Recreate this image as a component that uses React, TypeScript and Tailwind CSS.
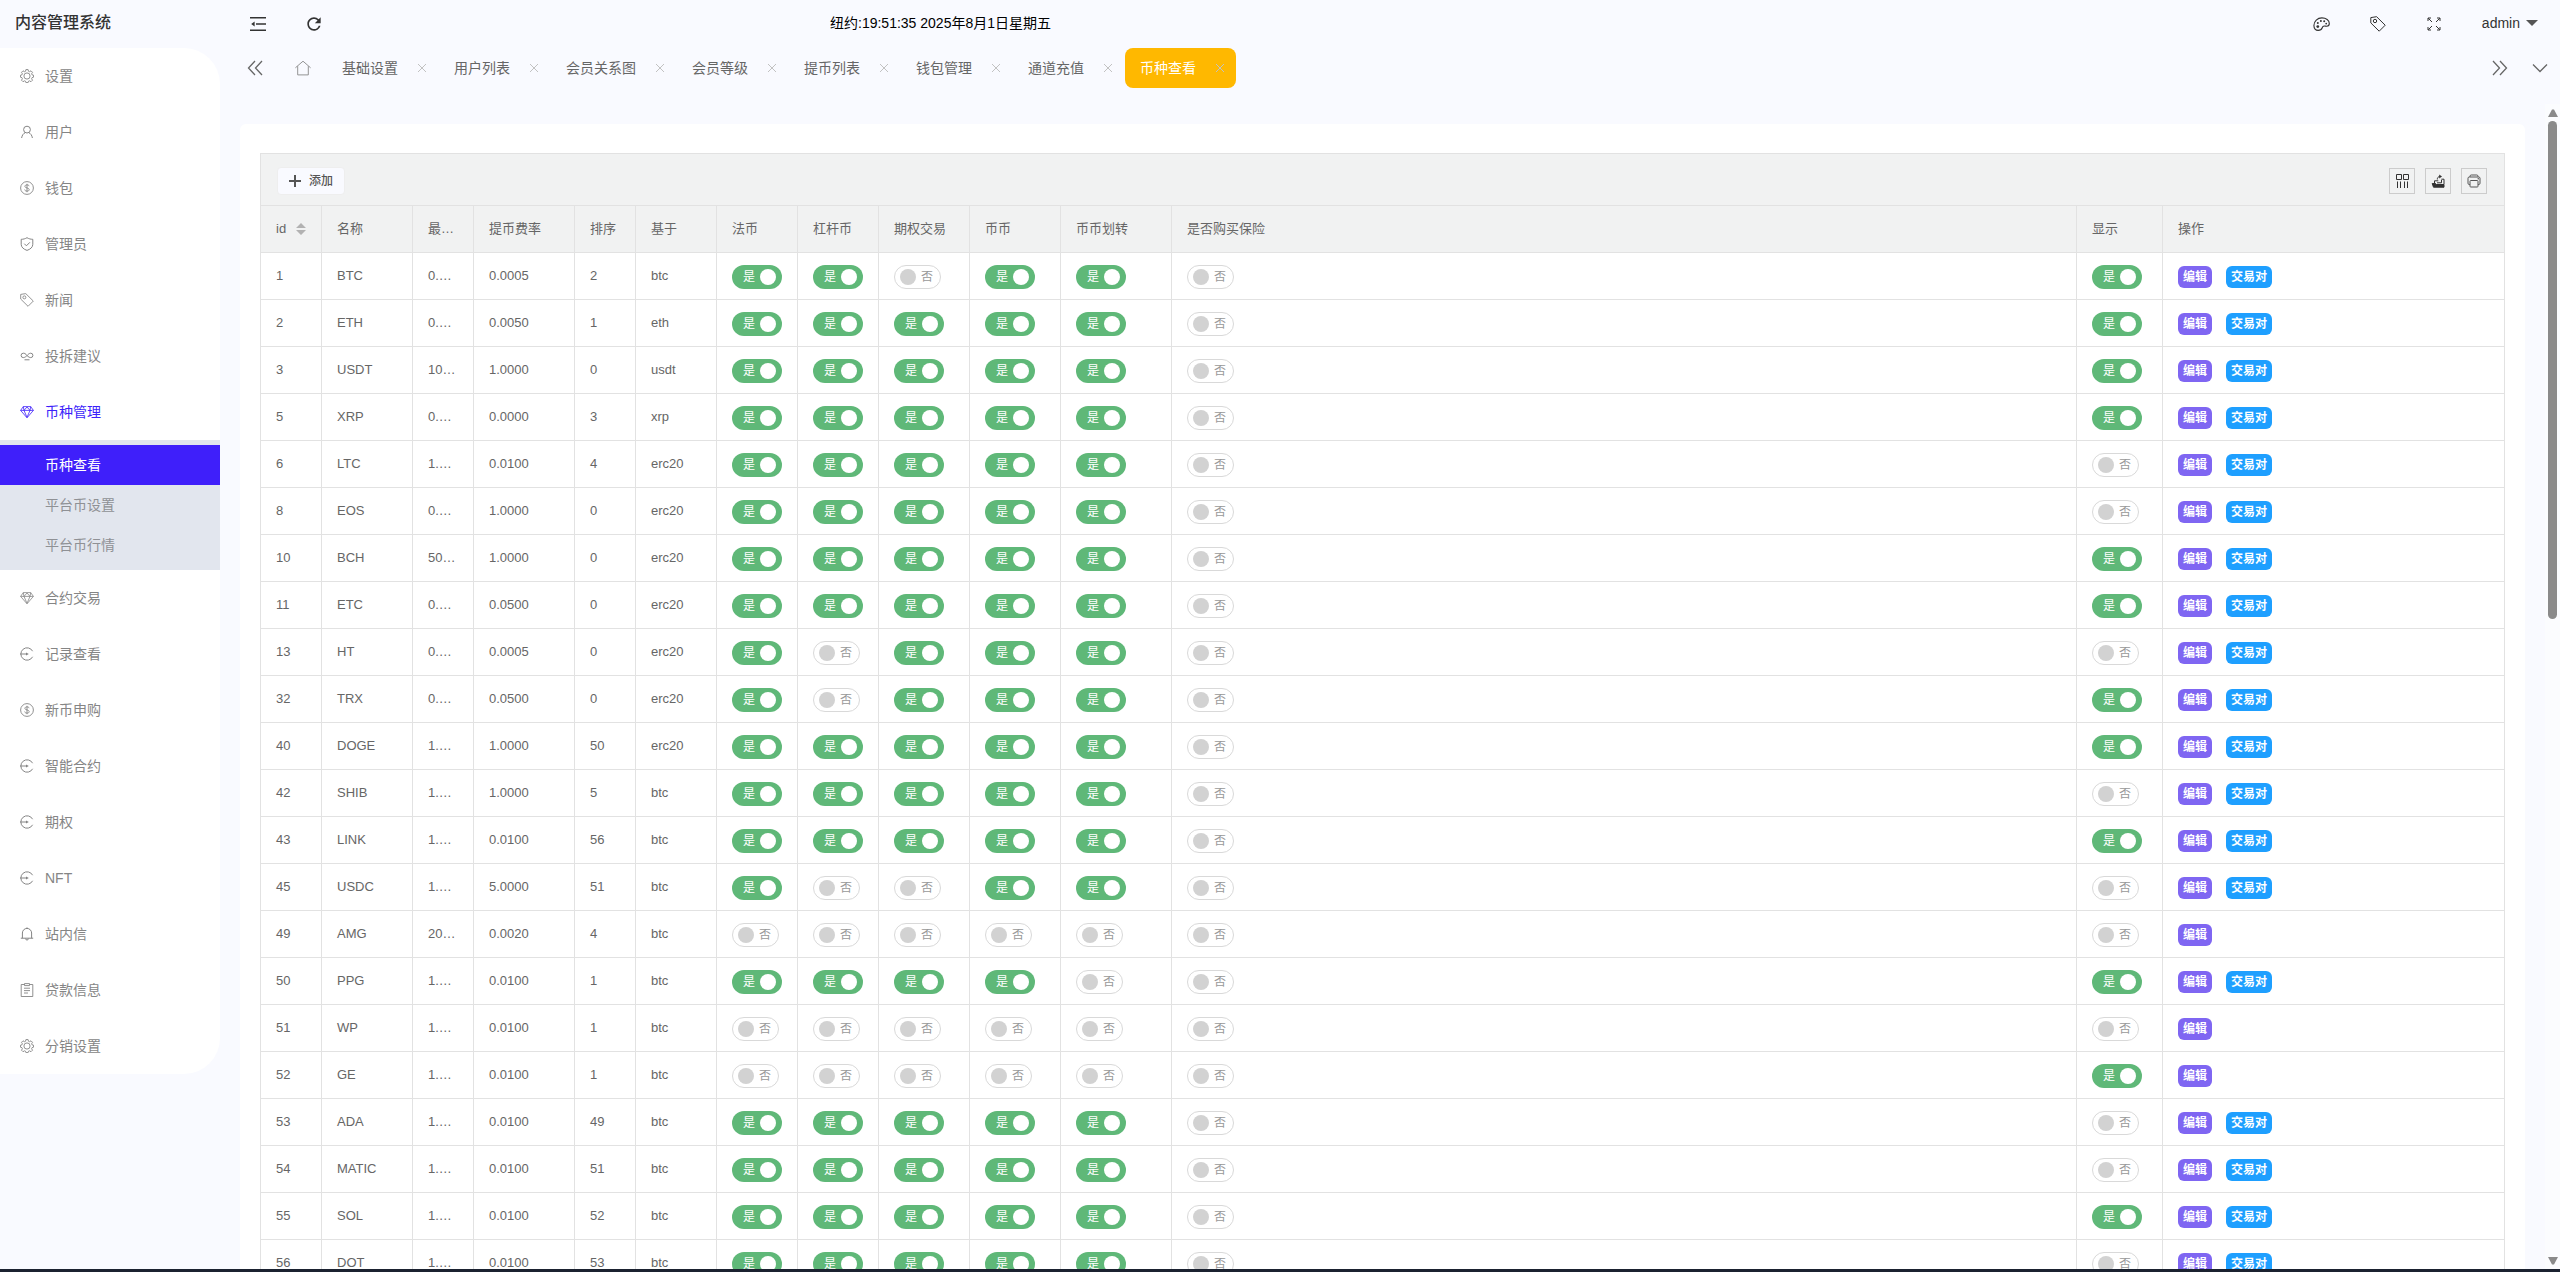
import { useState, type ReactNode } from 'react'
import { IoPrintOutline } from 'react-icons/io5'
import { MdRefresh } from 'react-icons/md'

// ── Icons ──────────────────────────────────────────────────────────────────

function Icon14({ width = 1, children }: { width?: number; children: ReactNode }) {
  return (
    <svg
      viewBox="0 0 14 14"
      className="size-[14px] shrink-0"
      fill="none"
      stroke="currentColor"
      strokeWidth={width}
      strokeLinejoin="round"
    >
      {children}
    </svg>
  )
}

function GearIcon() {
  return (
    <Icon14 width={0.9}>
      <path d="M5.900.6h2.200l.4 1.700 1 .4 1.500-.9 1.500 1.500-.9 1.500.4 1 1.500.4v2l-1.500.5-.4 1 .9 1.500-1.500 1.500-1.500-.9-1 .4-.4 1.400H5.900l-.4-1.400-1-.4-1.500.9-1.500-1.500.9-1.500-.4-1L.5 8.200v-2L2 5.800l.4-1-.9-1.500L3 1.800l1.500.9 1-.4Z" />
      <circle cx="7" cy="7" r="3.100" />
    </Icon14>
  )
}

function UserIcon() {
  return (
    <Icon14>
      <circle cx="7" cy="4.600" r="3.400" />
      <path d="M5.300 7.600C3.400 8.400 2 10.400 1.600 13M8.700 7.600c1.900.8 3.300 2.800 3.700 5.400" />
    </Icon14>
  )
}

function DollarIcon() {
  return (
    <Icon14 width={0.9}>
      <circle cx="7" cy="7" r="6.400" />
      <path d="M9.100 5.200C9 4.300 8.200 3.900 7 3.900s-2.100.5-2.100 1.500C4.900 7.400 9.200 6.500 9.200 8.600c0 1-.9 1.500-2.200 1.500s-2.200-.5-2.300-1.500M7 2.800v8.400" />
    </Icon14>
  )
}

function ShieldIcon() {
  return (
    <Icon14>
      <path d="M7 .7c1.800 1.100 3.700 1.600 5.800 1.600v5c0 2.900-2.300 4.900-5.800 6.100C3.500 12.200 1.200 10.200 1.200 7.300v-5C3.300 2.300 5.200 1.800 7 .7Z" />
      <path d="m4.300 6.700 2.100 2.100 3.500-3.500" />
    </Icon14>
  )
}

function TagIcon({ className }: { className: string }) {
  return (
    <svg viewBox="0 0 16 16" className={className} fill="none" stroke="currentColor" strokeWidth="1" strokeLinejoin="round">
      <path d="M.8 1.600 6.600.7l8.600 8.500-6 6L.8 6.900Z" />
      <circle cx="5" cy="5" r="1.700" />
    </svg>
  )
}

function LinkIcon() {
  return (
    <Icon14>
      <path d="M7 6.500C5.500 4.500 4.400 4.200 3.300 4.200a2.200 2.200 0 0 0 0 4.400C4.800 8.600 6 7.500 7 6.500c1-1 2.200-2.300 3.700-2.300a2.200 2.200 0 0 1 0 4.400C9.600 8.600 8.500 8 7 6.500Z" />
      <path d="M4.500 10.800h5" />
    </Icon14>
  )
}

function DiamondIcon() {
  return (
    <Icon14 width={0.8}>
      <path d="M3.300 1.600h7.400l2.700 3.800L7 12.800.6 5.400Z" />
      <path d="M.6 5.400h12.800M4 5.400l3 7 3-7M3.300 1.600l.7 3.800 3-3.400 3 3.400.7-3.800" />
    </Icon14>
  )
}

function EnterIcon() {
  return (
    <Icon14>
      <path d="M12.600 4.200A6.200 6.200 0 1 0 12.600 9.800" />
      <path d="M0 7h7" />
      <path d="M6 5.400 8.800 7 6 8.600Z" fill="currentColor" stroke="none" />
    </Icon14>
  )
}

function BellIcon() {
  return (
    <Icon14>
      <path d="M.8 11.200h12.400M2.400 11.200V6a4.600 4.600 0 0 1 9.200 0v5.200M7 1.500V.4M5.600 11.600a1.400 1.400 0 0 0 2.800 0" />
    </Icon14>
  )
}

function FormIcon() {
  return (
    <Icon14 width={0.9}>
      <path d="M4 1.500H1.200v12h11.600v-12H10" />
      <path d="M4.500.6h5v2h-5ZM4 5.200h6M4 7.600h6M4 10h4" />
    </Icon14>
  )
}

function FoldIcon() {
  return (
    <svg viewBox="0 0 16 16" className="size-4" fill="none" stroke="currentColor" strokeWidth="1.600">
      <path d="M0 1.800h16M6 8h10M0 14.200h16" />
      <path d="M4.600 5.600v4.800L1.200 8Z" fill="currentColor" stroke="none" />
    </svg>
  )
}

function PaletteIcon() {
  return (
    <svg viewBox="0 0 17 16" className="h-4 w-[17px]" fill="none" stroke="currentColor" strokeWidth="1.100">
      <path d="M5.200 14.400C2.500 14.400.9 12.500.9 9.600.9 5.200 4.500 1.900 8.900 1.900c4.200 0 7.400 2.400 7.400 5.600 0 1.700-1 2.700-2.600 2.700-1 0-1.700-.2-2.500-.2-1.200 0-1.700.8-2.100 2-.5 1.500-1.700 2.400-3.900 2.400Z" />
      <g fill="currentColor" stroke="none">
        <circle cx="4.800" cy="10.600" r="1.400" />
        <circle cx="4.800" cy="6.900" r="1" />
        <circle cx="7.900" cy="4.900" r="1" />
        <circle cx="11.200" cy="5.300" r="1" />
        <circle cx="13.200" cy="7.600" r="0.900" />
      </g>
    </svg>
  )
}

function ExpandIcon() {
  return (
    <Icon14>
      <path d="M1 4V1h3M1.200 1.200l3.800 3.800M10 1h3v3M12.800 1.200 9 5M1 10v3h3M1.200 12.800 5 9M10 13h3v-3M12.800 12.800 9 9" />
    </Icon14>
  )
}

function HomeIcon() {
  return (
    <svg viewBox="0 0 16 16" className="size-4" fill="none" stroke="currentColor" strokeWidth="0.900">
      <path d="M.4 7.800 8 1.200l7.600 6.600M2.700 6.200v8.700h10.600V6.200" />
    </svg>
  )
}

function ChevronIcon({ d }: { d: string }) {
  return (
    <svg viewBox="0 0 16 16" className="size-4" fill="none" stroke="currentColor" strokeWidth="1.300">
      <path d={d} />
    </svg>
  )
}

function ColumnsIcon() {
  return (
    <Icon14>
      <path d="M1.500.500h5v5h-5ZM8.500.500h5v5h-5Z" />
      <path d="M2.500 7.500V14M5.500 7.500V14M9.500 7.500V14M12.500 7.500V14" />
    </Icon14>
  )
}

function ExportIcon() {
  return (
    <Icon14>
      <path d="M1.200 9.500h3.300l.8 1h7.700v2.700H2.500Z" fill="currentColor" />
      <path d="M3.500 9V6.800h3.800M10.300 5.200h2.700v5M6 8.800h4.500V6" />
      <path d="M6.300 5.500c0-1.800.9-2.900 2.400-3" />
      <path d="M8.200.600 11 2.600 8.200 4.600Z" fill="currentColor" stroke="none" />
    </Icon14>
  )
}

// ── Data ───────────────────────────────────────────────────────────────────

type MenuItem = { label: string; icon: ReactNode; children?: string[] }

const menu: MenuItem[] = [
  { label: '设置', icon: <GearIcon /> },
  { label: '用户', icon: <UserIcon /> },
  { label: '钱包', icon: <DollarIcon /> },
  { label: '管理员', icon: <ShieldIcon /> },
  { label: '新闻', icon: <TagIcon className="size-[14px]" /> },
  { label: '投拆建议', icon: <LinkIcon /> },
  { label: '币种管理', icon: <DiamondIcon />, children: ['币种查看', '平台币设置', '平台币行情'] },
  { label: '合约交易', icon: <DiamondIcon /> },
  { label: '记录查看', icon: <EnterIcon /> },
  { label: '新币申购', icon: <DollarIcon /> },
  { label: '智能合约', icon: <EnterIcon /> },
  { label: '期权', icon: <EnterIcon /> },
  { label: 'NFT', icon: <EnterIcon /> },
  { label: '站内信', icon: <BellIcon /> },
  { label: '贷款信息', icon: <FormIcon /> },
  { label: '分销设置', icon: <GearIcon /> },
]

const tabs = ['基础设置', '用户列表', '会员关系图', '会员等级', '提币列表', '钱包管理', '通道充值', '币种查看']

const columns = [
  { title: 'id', width: 'w-[61px]' },
  { title: '名称', width: 'w-[91px]' },
  { title: '最…', width: 'w-[61px]' },
  { title: '提币费率', width: 'w-[101px]' },
  { title: '排序', width: 'w-[61px]' },
  { title: '基于', width: 'w-[81px]' },
  { title: '法币', width: 'w-[81px]' },
  { title: '杠杆币', width: 'w-[81px]' },
  { title: '期权交易', width: 'w-[91px]' },
  { title: '币币', width: 'w-[91px]' },
  { title: '币币划转', width: 'w-[111px]' },
  { title: '是否购买保险', width: 'w-auto' },
  { title: '显示', width: 'w-[86px]' },
  { title: '操作', width: 'w-[342px]' },
]

// id, name, min, fee, sort, base, switches (法币 … 显示), has pairs
type Row = [number, string, string, string, number, string, string, boolean]

const rows: Row[] = [
  [1, 'BTC', '0.…', '0.0005', 2, 'btc', '1101101', true],
  [2, 'ETH', '0.…', '0.0050', 1, 'eth', '1111101', true],
  [3, 'USDT', '10…', '1.0000', 0, 'usdt', '1111101', true],
  [5, 'XRP', '0.…', '0.0000', 3, 'xrp', '1111101', true],
  [6, 'LTC', '1.…', '0.0100', 4, 'erc20', '1111100', true],
  [8, 'EOS', '0.…', '1.0000', 0, 'erc20', '1111100', true],
  [10, 'BCH', '50…', '1.0000', 0, 'erc20', '1111101', true],
  [11, 'ETC', '0.…', '0.0500', 0, 'erc20', '1111101', true],
  [13, 'HT', '0.…', '0.0005', 0, 'erc20', '1011100', true],
  [32, 'TRX', '0.…', '0.0500', 0, 'erc20', '1011101', true],
  [40, 'DOGE', '1.…', '1.0000', 50, 'erc20', '1111101', true],
  [42, 'SHIB', '1.…', '1.0000', 5, 'btc', '1111100', true],
  [43, 'LINK', '1.…', '0.0100', 56, 'btc', '1111101', true],
  [45, 'USDC', '1.…', '5.0000', 51, 'btc', '1001100', true],
  [49, 'AMG', '20…', '0.0020', 4, 'btc', '0000000', false],
  [50, 'PPG', '1.…', '0.0100', 1, 'btc', '1111001', true],
  [51, 'WP', '1.…', '0.0100', 1, 'btc', '0000000', false],
  [52, 'GE', '1.…', '0.0100', 1, 'btc', '0000001', false],
  [53, 'ADA', '1.…', '0.0100', 49, 'btc', '1111100', true],
  [54, 'MATIC', '1.…', '0.0100', 51, 'btc', '1111100', true],
  [55, 'SOL', '1.…', '0.0100', 52, 'btc', '1111101', true],
  [56, 'DOT', '1.…', '0.0100', 53, 'btc', '1111100', true],
]

// ── Pieces ─────────────────────────────────────────────────────────────────

function Switch({ initial, label }: { initial: boolean; label: string }) {
  const [on, setOn] = useState(initial)
  return (
    <label
      className={
        on
          ? 'relative flex h-6 w-[50px] cursor-pointer items-center justify-between rounded-full bg-[#5fb878] pl-[11px] pr-[6px] text-xs text-white'
          : 'relative flex h-6 w-[47px] cursor-pointer flex-row-reverse items-center justify-between rounded-full border border-[#d9d9d9] bg-white pl-[5px] pr-[7px] text-xs text-[#999]'
      }
    >
      <input
        type="checkbox"
        aria-label={label}
        checked={on}
        onChange={e => setOn(e.target.checked)}
        className="sr-only"
      />
      <span>{on ? '是' : '否'}</span>
      <span className={on ? 'size-4 rounded-full bg-white' : 'size-4 rounded-full bg-[#d2d2d2]'} />
    </label>
  )
}

function Sidebar() {
  return (
    <aside className="flex w-[220px] shrink-0 flex-col">
      <h1 className="flex h-12 shrink-0 items-center pb-[2px] pl-[15px] text-base font-medium text-[#333]">内容管理系统</h1>
      <nav className="rounded-r-[36px] bg-white text-sm text-[#858585]">
        {menu.map(item => (
          <div key={item.label}>
            <a
              href="#"
              className={
                item.children
                  ? 'flex h-14 items-center gap-[11px] pl-5 text-[#3d1ffa]'
                  : 'flex h-14 items-center gap-[11px] pl-5'
              }
            >
              {item.icon}
              {item.label}
            </a>
            {item.children && (
              <div className="bg-[#e2e6ee] py-[5px]">
                {item.children.map((child, i) => (
                  <a
                    key={child}
                    href="#"
                    className={
                      i === 0
                        ? 'flex h-10 items-center bg-[#3f1ffa] pl-[45px] text-white'
                        : 'flex h-10 items-center pl-[45px] text-[#8f9195]'
                    }
                  >
                    {child}
                  </a>
                ))}
              </div>
            )}
          </div>
        ))}
      </nav>
    </aside>
  )
}

function Header() {
  const btn = 'flex h-12 w-14 items-center justify-center'
  return (
    <header className="flex h-12 shrink-0 items-center pl-[10px] text-[#333]">
      <button aria-label="收起菜单" className={btn}><FoldIcon /></button>
      <button aria-label="刷新" className={btn}><MdRefresh size={20} /></button>
      <p className="ml-[488px] pb-[2px] text-sm text-black">纽约:19:51:35 2025年8月1日星期五</p>
      <div className="ml-auto flex items-center pr-[22px]">
        <button aria-label="主题" className={btn}><PaletteIcon /></button>
        <button aria-label="便签" className={btn}><TagIcon className="size-4" /></button>
        <button aria-label="全屏" className={btn}><ExpandIcon /></button>
        <button className="flex items-center gap-[6px] pb-[2px] pl-5 text-sm">
          admin
          <svg viewBox="0 0 12 6" className="h-[6px] w-3 text-[#555]" fill="currentColor">
            <path d="M0 0h12L6 6Z" />
          </svg>
        </button>
      </div>
    </header>
  )
}

function TabBar() {
  const [active, setActive] = useState('币种查看')
  return (
    <div className="flex h-10 shrink-0 items-center pl-[15px] text-sm text-[#666]">
      <button aria-label="向左" className="flex h-10 w-10 items-center justify-center">
        <ChevronIcon d="M8 1 1.500 8 8 15M15 1 8.500 8l6.500 7" />
      </button>
      <button aria-label="首页" className="ml-[5px] mr-px flex h-10 w-[46px] items-center justify-center text-[#888]">
        <HomeIcon />
      </button>
      {tabs.map(tab => (
        <div
          key={tab}
          className={
            tab === active
              ? 'mr-px flex h-10 items-center rounded-lg bg-[#ffb800] pl-[15px] pr-2 text-white'
              : 'mr-px flex h-10 items-center pl-[15px] pr-2'
          }
        >
          <button onClick={() => setActive(tab)}>{tab}</button>
          <button aria-label={`关闭${tab}`} className="ml-4 flex size-4 items-center justify-center text-[#c2c2c2]">
            <svg viewBox="0 0 10 10" className="size-[10px]" fill="none" stroke="currentColor" strokeWidth="1">
              <path d="m1 1 8 8M9 1 1 9" />
            </svg>
          </button>
        </div>
      ))}
      <div className="ml-auto flex">
        <button aria-label="向右" className="flex h-10 w-10 items-center justify-center">
          <ChevronIcon d="m1 1 6.500 7L1 15M8 1l6.500 7L8 15" />
        </button>
        <button aria-label="更多" className="flex h-10 w-10 items-center justify-center">
          <ChevronIcon d="m1 4.500 7 7 7-7" />
        </button>
      </div>
    </div>
  )
}

function CoinTable() {
  const tool = 'flex size-[26px] items-center justify-center border border-[#ccc]'
  const cell = 'h-[47px] border-b border-r border-[#e2e2e2] px-[15px] py-0'
  return (
    <div className="border-l border-t border-[#e2e2e2] text-[13px] text-[#666]">
      <div className="flex h-[52px] items-center justify-between border-b border-r border-[#e2e2e2] bg-[#f1f2f2] pl-4 pr-[17px] pt-[2px]">
        <button className="flex h-7 items-center gap-2 rounded border border-[#eee] bg-[#f9faff] px-[11px] text-xs font-medium text-[#555]">
          <svg viewBox="0 0 12 12" className="size-3" fill="none" stroke="currentColor" strokeWidth="2">
            <path d="M6 0v12M0 6h12" />
          </svg>
          添加
        </button>
        <div className="flex gap-[10px] text-[#333]">
          <button aria-label="筛选列" className={tool}><ColumnsIcon /></button>
          <button aria-label="导出" className={tool}><ExportIcon /></button>
          <button aria-label="打印" className={tool}><IoPrintOutline size={16} color="#555" /></button>
        </div>
      </div>
      <table className="w-full table-fixed border-separate border-spacing-0">
        <colgroup>
          {columns.map(c => <col key={c.title} className={c.width} />)}
        </colgroup>
        <thead>
          <tr className="bg-[#f1f2f2] text-left">
            {columns.map(c => (
              <th key={c.title} className={`${cell} whitespace-nowrap font-normal`}>
                {c.title === 'id' ? (
                  <button className="flex items-center gap-[10px]">
                    id
                    <svg viewBox="0 0 10 12" className="h-3 w-[10px] text-[#b2b2b2]" fill="currentColor">
                      <path d="M5 0l5 5H0ZM5 12l5-5H0Z" />
                    </svg>
                  </button>
                ) : c.title}
              </th>
            ))}
          </tr>
        </thead>
        <tbody className="bg-white">
          {rows.map(([id, name, min, fee, sort, base, flags, pairs]) => (
            <tr key={id}>
              {[id, name, min, fee, sort, base].map((v, i) => (
                <td key={i} className={`${cell} whitespace-nowrap`}>{v}</td>
              ))}
              {flags.split('').map((f, i) => (
                <td key={`s${i}`} className={`${cell} pt-[2px]`}>
                  <Switch initial={f === '1'} label={`${name} ${columns[i + 6].title}`} />
                </td>
              ))}
              <td className={`${cell} pt-[2px]`}>
                <div className="flex gap-[14px] text-xs font-bold text-white">
                  <button className="h-[22px] rounded-md bg-[#7f66f2] px-[5px]">编辑</button>
                  {pairs && <button className="h-[22px] rounded-md bg-[#1e9fff] px-[5px]">交易对</button>}
                </div>
              </td>
            </tr>
          ))}
        </tbody>
      </table>
    </div>
  )
}

function Scrollbar() {
  return (
    <div className="flex w-[15px] shrink-0 flex-col items-center bg-[#fbfcfe] text-[#8a8a8a]">
      <div className="flex h-[17px] items-center">
        <svg viewBox="0 0 10 8" className="h-2 w-[10px]" fill="currentColor"><path d="M4 .5h2L10 8H0Z" /></svg>
      </div>
      <div className="w-full flex-1">
        <div className="mx-auto h-[44%] w-[9px] rounded-full bg-[#8a8a8a]" />
      </div>
      <div className="flex h-[17px] items-center">
        <svg viewBox="0 0 10 8" className="h-2 w-[10px]" fill="currentColor"><path d="M0 0h10L6 7.500H4Z" /></svg>
      </div>
    </div>
  )
}

export default function App() {
  return (
    <div className="flex h-screen flex-col overflow-hidden bg-[#f9faff] font-['Liberation_Sans','Noto_Sans_CJK_SC',sans-serif]">
      <div className="flex min-h-0 flex-1">
        <Sidebar />
        <div className="flex min-w-0 flex-1 flex-col">
          <Header />
          <TabBar />
          <div className="mt-4 flex min-h-0 flex-1">
            <main className="min-w-0 flex-1 overflow-hidden px-5 pt-5">
              <div className="rounded-md bg-white px-5 pb-5 pt-[29px]">
                <CoinTable />
              </div>
            </main>
            <Scrollbar />
          </div>
        </div>
      </div>
      <div className="h-[3px] shrink-0 bg-[#1b2230]" />
    </div>
  )
}
